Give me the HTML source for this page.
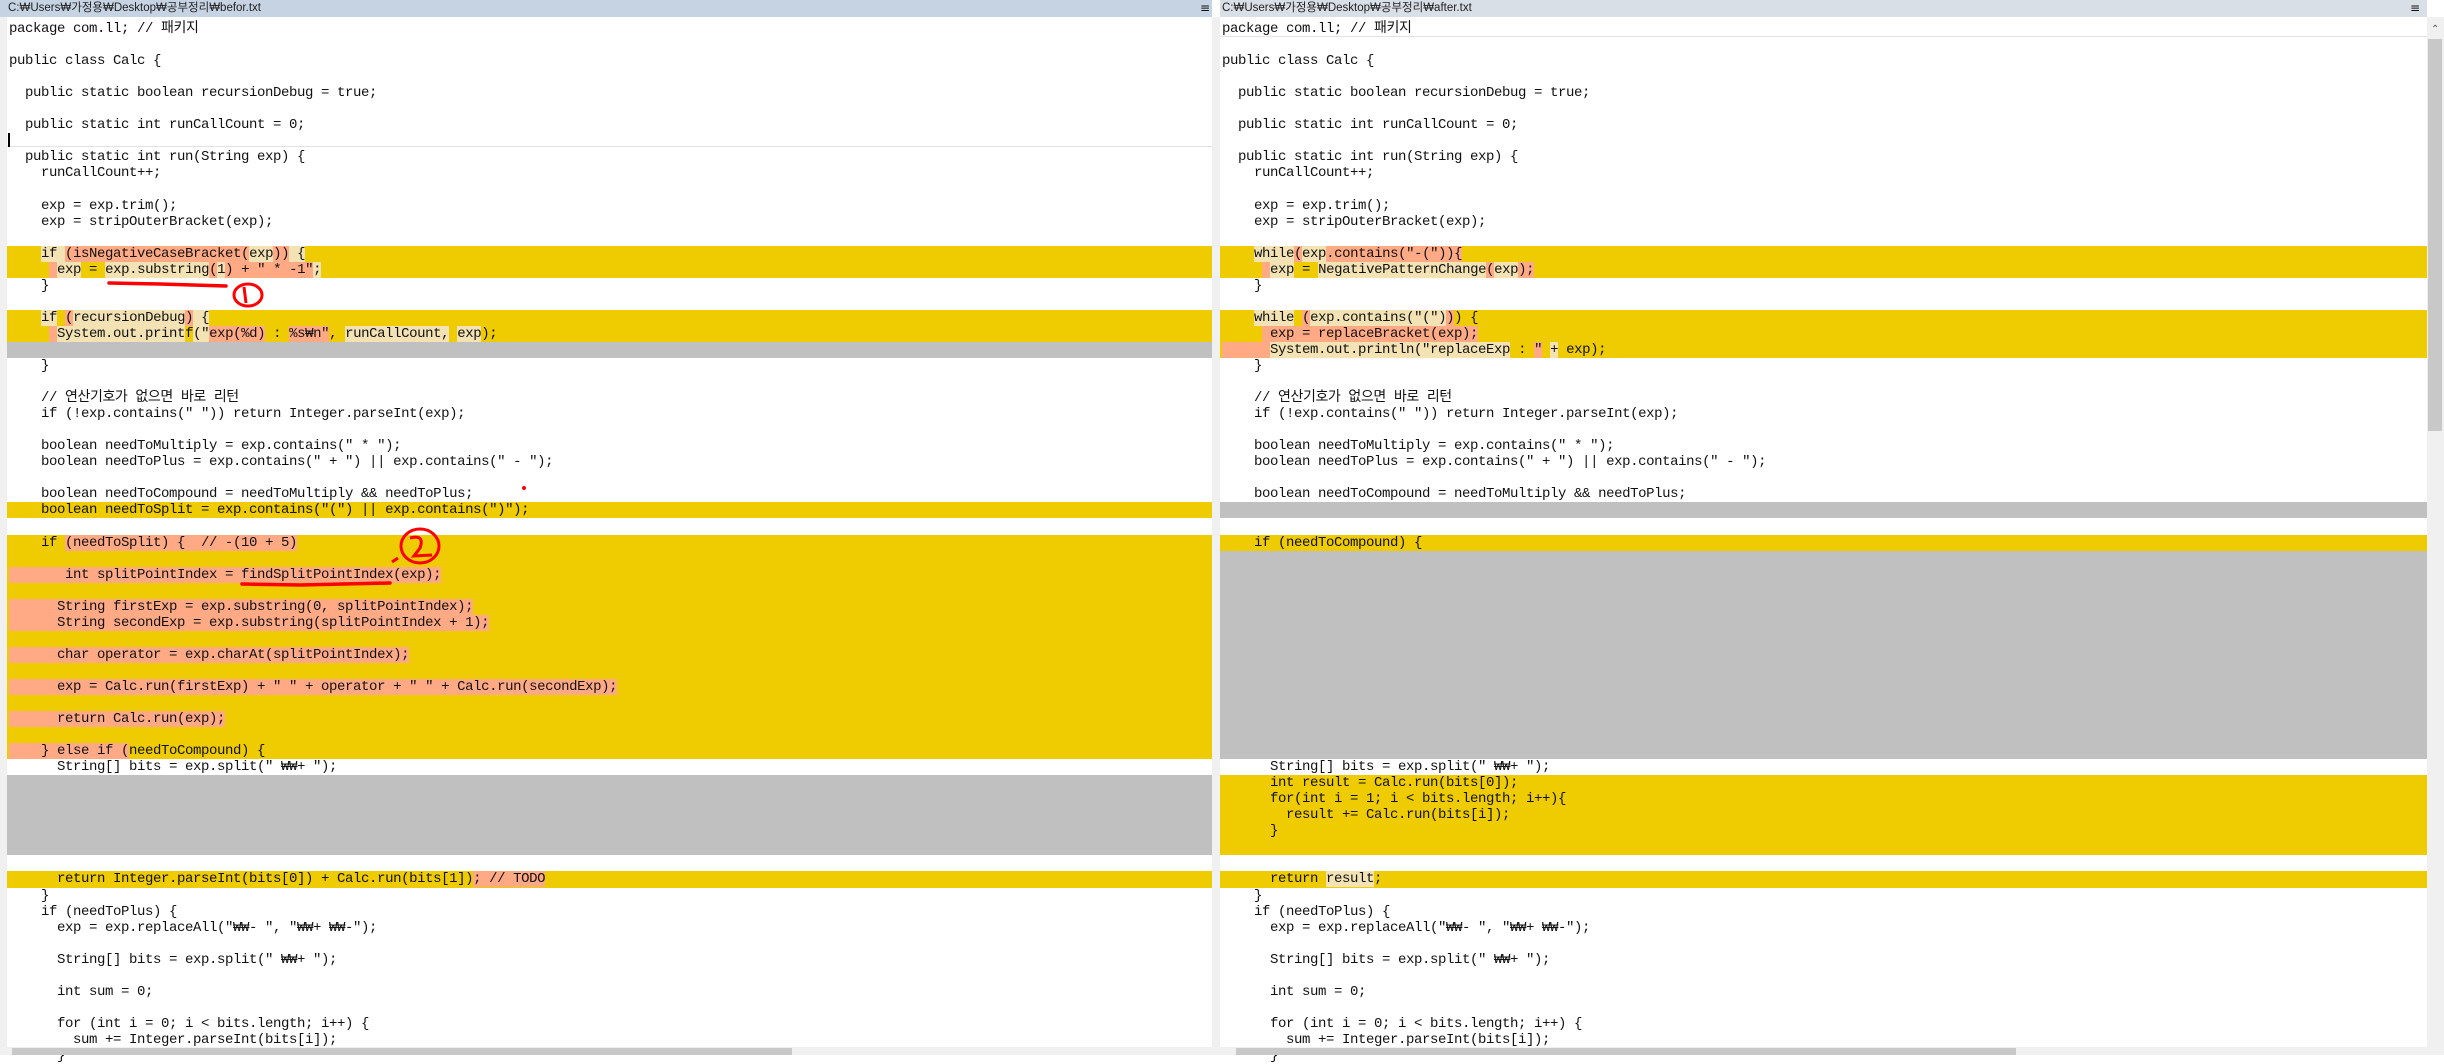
<!DOCTYPE html>
<html><head><meta charset="utf-8"><style>
*{margin:0;padding:0;box-sizing:border-box}
body{width:2444px;height:1055px;overflow:hidden;background:#fff;position:relative;font-family:"Liberation Mono","Noto Sans CJK KR",monospace;font-size:14px;letter-spacing:-0.4px;color:#111}
.hd{position:absolute;top:0;height:17px;font-family:"Liberation Sans","Noto Sans CJK KR",sans-serif;font-size:11.5px;letter-spacing:0;line-height:17px;color:#222;white-space:nowrap}
.pane{position:absolute;top:21px}
.l{height:16.05px;line-height:16.05px;white-space:pre;padding-left:2px}
.y{background:#efcb02}.g{background:#c0c0c0}
s{text-decoration:none;background:#ffaa85}
p{display:inline;background:#f3e2b3}
.ic{position:absolute;top:2px;font-size:12px;line-height:12px;font-family:"DejaVu Sans",sans-serif}
</style></head><body>
<div class="hd" style="left:0;width:1212px;background:#c6d3e3;padding-left:8px">C:₩Users₩가정용₩Desktop₩공부정리₩befor.txt</div>
<div class="ic" style="left:1200px">≡</div>
<div class="hd" style="left:1220px;width:1207px;background:#d9dfe7;padding-left:2px">C:₩Users₩가정용₩Desktop₩공부정리₩after.txt</div>
<div class="ic" style="left:2410px">≡</div>
<div style="position:absolute;left:0;top:17px;width:7px;height:1030px;background:#f0f0f0"></div>
<div style="position:absolute;left:1212px;top:17px;width:8px;height:1038px;background:#f0f0f0"></div>
<div style="position:absolute;left:2427px;top:17px;width:17px;height:1038px;background:#f0f0f0"></div>
<div style="position:absolute;left:2428px;top:39px;width:14px;height:392px;background:#c8c8c8"></div>
<div style="position:absolute;left:2431px;top:24px;font-size:10px;color:#555;font-family:'DejaVu Sans'">⌃</div>
<div style="position:absolute;left:7px;top:146px;width:1205px;height:1px;background:#e2e2e2"></div>
<div style="position:absolute;left:8px;top:133px;width:2px;height:14px;background:#000"></div>
<div style="position:absolute;left:1220px;top:36px;width:1207px;height:1px;background:#e2e2e2"></div>

<div class="pane" style="left:7px;width:1205px">
<div class="l">package com.ll; // 패키지</div>
<div class="l"> </div>
<div class="l">public class Calc {</div>
<div class="l"> </div>
<div class="l">  public static boolean recursionDebug = true;</div>
<div class="l"> </div>
<div class="l">  public static int runCallCount = 0;</div>
<div class="l"> </div>
<div class="l">  public static int run(String exp) {</div>
<div class="l">    runCallCount++;</div>
<div class="l"> </div>
<div class="l">    exp = exp.trim();</div>
<div class="l">    exp = stripOuterBracket(exp);</div>
<div class="l"> </div>
<div class="l y">    <p>if </p><s>(isNegativeCaseBracket(</s><p>exp</p><s>))</s><p> {</p></div>
<div class="l y">     <s> </s><p>exp</p> = <p>exp.substring</p><s>(</s><p>1</p><s>) + " * -1"</s><p>;</p></div>
<div class="l">    }</div>
<div class="l"> </div>
<div class="l y">    <p>if</p> <s>(</s><p>recursionDebug</p><s>)</s><p> {</p></div>
<div class="l y">     <s> </s><p>System.out.print</p>f<p>("</p><s>exp(%d)</s> : <s>%s₩n"</s>, <p>runCallCount,</p> <p>exp</p>);</div>
<div class="l g"> </div>
<div class="l">    }</div>
<div class="l"> </div>
<div class="l">    // 연산기호가 없으면 바로 리턴</div>
<div class="l">    if (!exp.contains(" ")) return Integer.parseInt(exp);</div>
<div class="l"> </div>
<div class="l">    boolean needToMultiply = exp.contains(" * ");</div>
<div class="l">    boolean needToPlus = exp.contains(" + ") || exp.contains(" - ");</div>
<div class="l"> </div>
<div class="l">    boolean needToCompound = needToMultiply &amp;&amp; needToPlus;</div>
<div class="l y">    boolean needToSplit = exp.contains("(") || exp.contains(")");</div>
<div class="l"> </div>
<div class="l y">    if <s>(needToSplit) {  // -(10 + 5)</s></div>
<div class="l y"> </div>
<div class="l y"><s>       int splitPointIndex = findSplitPointIndex(exp);</s></div>
<div class="l y"> </div>
<div class="l y"><s>      String firstExp = exp.substring(0, splitPointIndex);</s></div>
<div class="l y"><s>      String secondExp = exp.substring(splitPointIndex + 1);</s></div>
<div class="l y"> </div>
<div class="l y"><s>      char operator = exp.charAt(splitPointIndex);</s></div>
<div class="l y"> </div>
<div class="l y"><s>      exp = Calc.run(firstExp) + " " + operator + " " + Calc.run(secondExp);</s></div>
<div class="l y"> </div>
<div class="l y"><s>      return Calc.run(exp);</s></div>
<div class="l y"> </div>
<div class="l y"><s>    } else if (</s>needToCompound) {</div>
<div class="l">      String[] bits = exp.split(" ₩₩+ ");</div>
<div class="l g"> </div><div class="l g"> </div><div class="l g"> </div><div class="l g"> </div><div class="l g"> </div>
<div class="l"> </div>
<div class="l y">      return Integer.parseInt(bits[0]) + Calc.run(bits[1])<s>; // TODO</s></div>
<div class="l">    }</div>
<div class="l">    if (needToPlus) {</div>
<div class="l">      exp = exp.replaceAll("₩₩- ", "₩₩+ ₩₩-");</div>
<div class="l"> </div>
<div class="l">      String[] bits = exp.split(" ₩₩+ ");</div>
<div class="l"> </div>
<div class="l">      int sum = 0;</div>
<div class="l"> </div>
<div class="l">      for (int i = 0; i &lt; bits.length; i++) {</div>
<div class="l">        sum += Integer.parseInt(bits[i]);</div>
<div class="l">      }</div>
</div>

<div class="pane" style="left:1220px;width:1207px">
<div class="l">package com.ll; // 패키지</div>
<div class="l"> </div>
<div class="l">public class Calc {</div>
<div class="l"> </div>
<div class="l">  public static boolean recursionDebug = true;</div>
<div class="l"> </div>
<div class="l">  public static int runCallCount = 0;</div>
<div class="l"> </div>
<div class="l">  public static int run(String exp) {</div>
<div class="l">    runCallCount++;</div>
<div class="l"> </div>
<div class="l">    exp = exp.trim();</div>
<div class="l">    exp = stripOuterBracket(exp);</div>
<div class="l"> </div>
<div class="l y">    <p>while</p><s>(</s><p>exp</p><s>.contains("-(")){</s></div>
<div class="l y">     <s> </s><p>exp</p> = <p>NegativePatternChange</p><s>(</s><p>exp</p><s>);</s></div>
<div class="l">    }</div>
<div class="l"> </div>
<div class="l y">    <p>while</p> <s>(</s><p>exp.contains("(")</p><s>)</s>) {</div>
<div class="l y">     <s> exp = replaceBracket(exp);</s></div>
<div class="l y"><s>      </s><p>System.out.println("replaceExp</p> : <s>"</s> <p>+</p> exp);</div>
<div class="l">    }</div>
<div class="l"> </div>
<div class="l">    // 연산기호가 없으면 바로 리턴</div>
<div class="l">    if (!exp.contains(" ")) return Integer.parseInt(exp);</div>
<div class="l"> </div>
<div class="l">    boolean needToMultiply = exp.contains(" * ");</div>
<div class="l">    boolean needToPlus = exp.contains(" + ") || exp.contains(" - ");</div>
<div class="l"> </div>
<div class="l">    boolean needToCompound = needToMultiply &amp;&amp; needToPlus;</div>
<div class="l g"> </div>
<div class="l"> </div>
<div class="l y">    if (needToCompound) {</div>
<div class="l g"> </div><div class="l g"> </div><div class="l g"> </div><div class="l g"> </div><div class="l g"> </div><div class="l g"> </div><div class="l g"> </div><div class="l g"> </div><div class="l g"> </div><div class="l g"> </div><div class="l g"> </div><div class="l g"> </div><div class="l g"> </div>
<div class="l">      String[] bits = exp.split(" ₩₩+ ");</div>
<div class="l y">      int result = Calc.run(bits[0]);</div>
<div class="l y">      for(int i = 1; i &lt; bits.length; i++){</div>
<div class="l y">        result += Calc.run(bits[i]);</div>
<div class="l y">      }</div>
<div class="l y"> </div>
<div class="l"> </div>
<div class="l y">      return <p>result</p>;</div>
<div class="l">    }</div>
<div class="l">    if (needToPlus) {</div>
<div class="l">      exp = exp.replaceAll("₩₩- ", "₩₩+ ₩₩-");</div>
<div class="l"> </div>
<div class="l">      String[] bits = exp.split(" ₩₩+ ");</div>
<div class="l"> </div>
<div class="l">      int sum = 0;</div>
<div class="l"> </div>
<div class="l">      for (int i = 0; i &lt; bits.length; i++) {</div>
<div class="l">        sum += Integer.parseInt(bits[i]);</div>
<div class="l">      }</div>
</div>

<div style="position:absolute;left:0;top:1047px;width:1212px;height:8px;background:#f0f0f0"></div>
<div style="position:absolute;left:12px;top:1048px;width:780px;height:7px;background:#c8c8c8"></div>
<div style="position:absolute;left:1220px;top:1047px;width:1207px;height:8px;background:#f0f0f0"></div>
<div style="position:absolute;left:1236px;top:1048px;width:780px;height:7px;background:#c8c8c8"></div>

<svg style="position:absolute;left:0;top:0" width="2444" height="1055">
<path d="M109 283 L160 284 L226 286" stroke="#f00" stroke-width="3.5" fill="none" stroke-linecap="round"/>
<ellipse cx="248" cy="295" rx="14" ry="11" stroke="#f00" stroke-width="3" fill="none"/>
<path d="M244 287 L246 303" stroke="#f00" stroke-width="3" fill="none"/>
<path d="M242 584 L300 585 L390 583" stroke="#f00" stroke-width="3.5" fill="none" stroke-linecap="round"/>
<ellipse cx="420" cy="546" rx="19" ry="17" stroke="#f00" stroke-width="3" fill="none"/>
<path d="M410 538 Q425 534 420 548 L414 556 L432 555" stroke="#f00" stroke-width="3" fill="none"/>
<path d="M398 558 L392 562" stroke="#f00" stroke-width="3" fill="none"/>
<circle cx="524" cy="488" r="2" fill="#f00"/>
</svg>
</body></html>
